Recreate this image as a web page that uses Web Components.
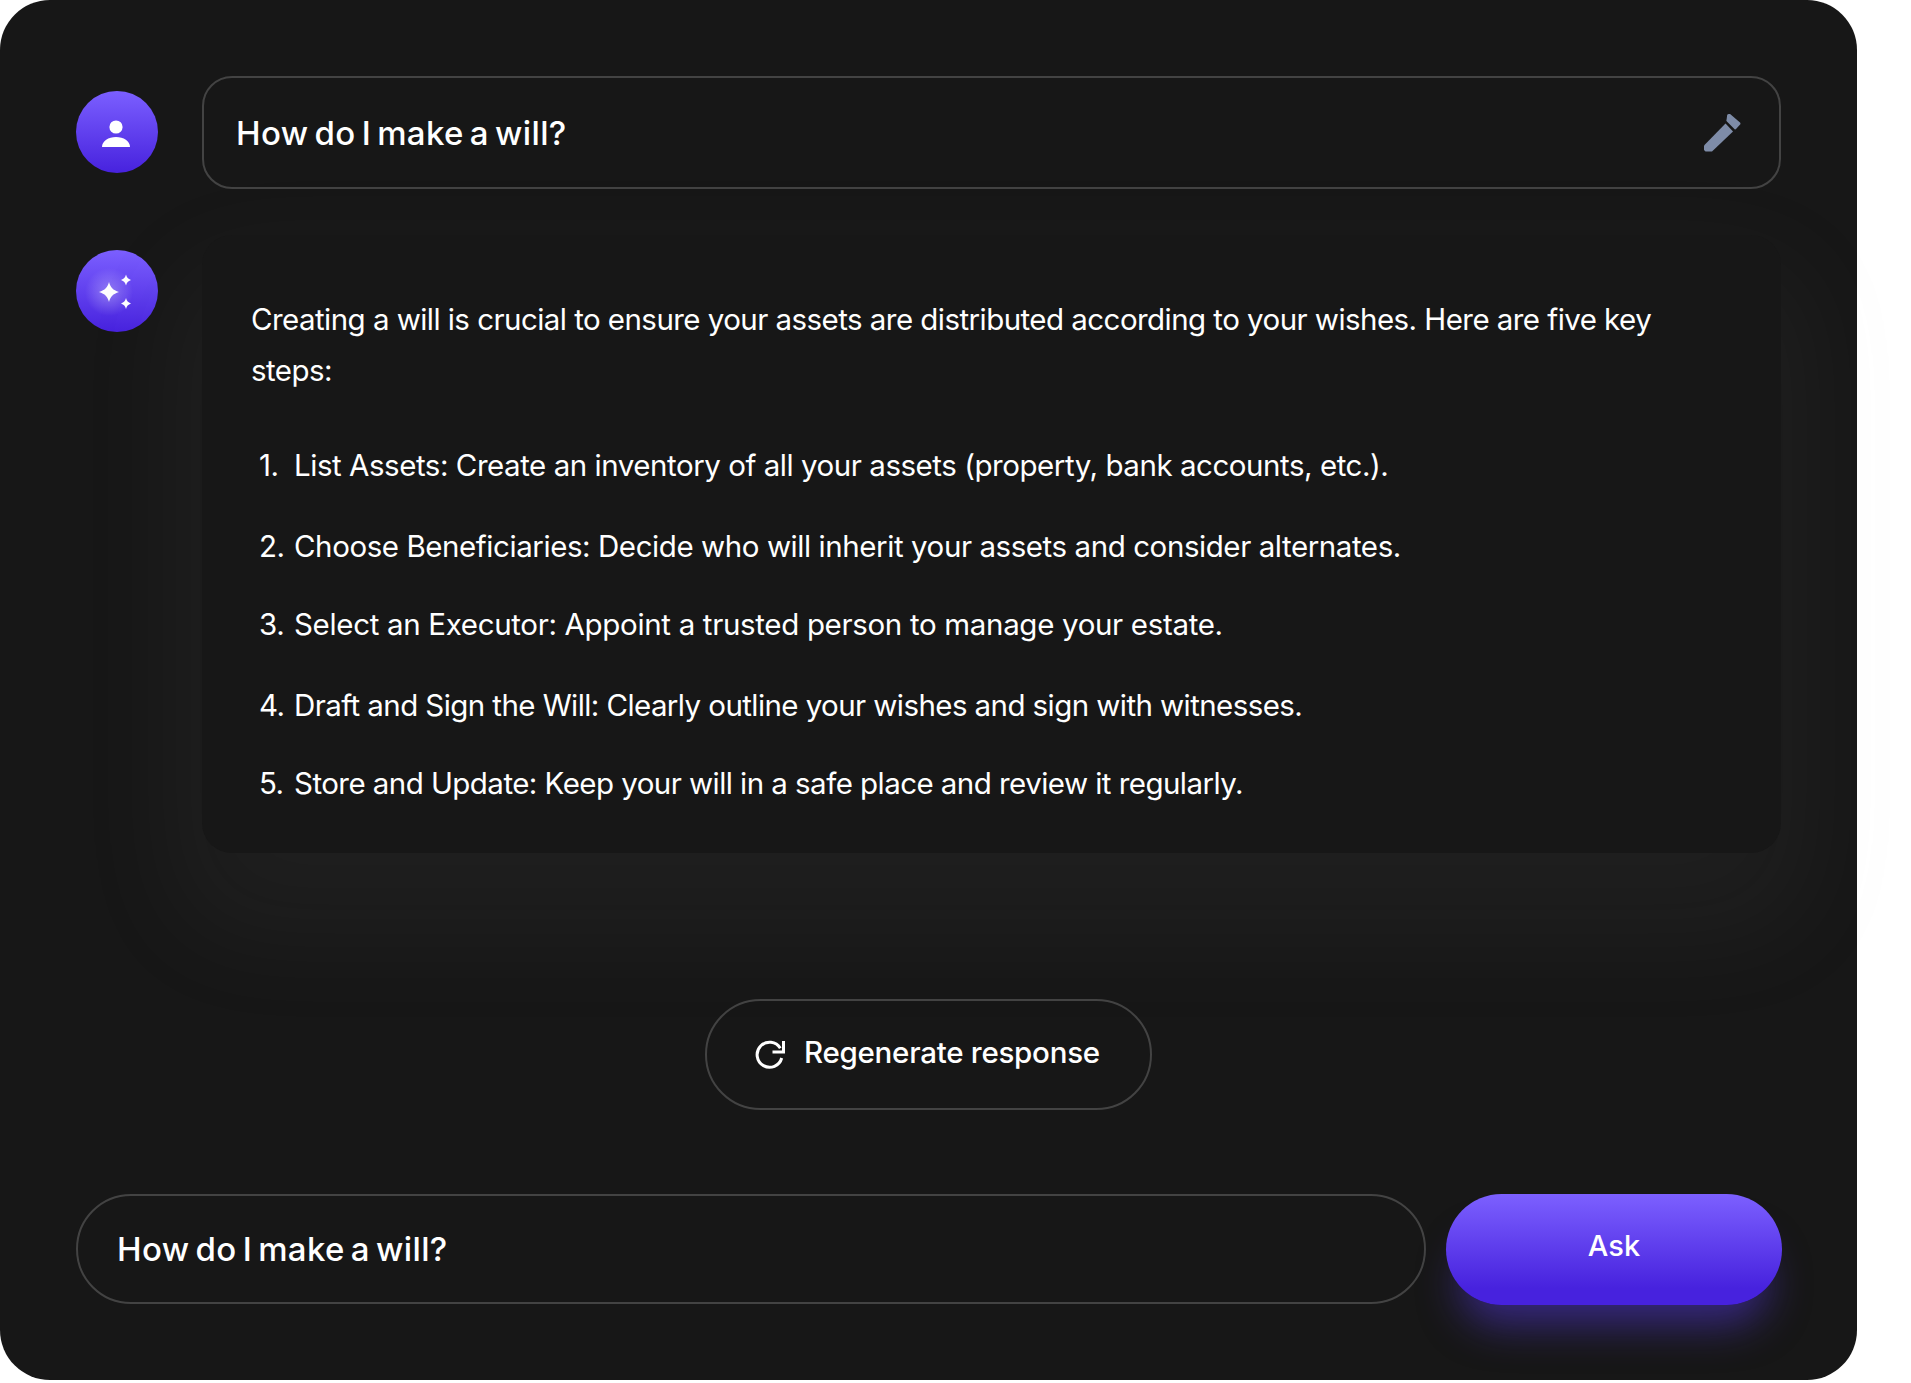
<!DOCTYPE html>
<html lang="en"><head><meta charset="utf-8"><title>Will chat</title>
<style>
html,body{margin:0;padding:0;background:#fff}
body{font-family:Inter,"Noto Sans",sans-serif;color:#fff}
</style></head><body>
<chat-panel>
  <chat-row kind="user">
    <question-box>How do I make a will?</question-box>
  </chat-row>
  <chat-row kind="ai">
    <answer-card>
      <p>Creating a will is crucial to ensure your assets are distributed according to your wishes. Here are five key steps:</p>
      <step-item n="1." gap="50" ls="-.46">List Assets: Create an inventory of all your assets (property, bank accounts, etc.).</step-item>
      <step-item n="2." gap="43" ls="-.43">Choose Beneficiaries: Decide who will inherit your assets and consider alternates.</step-item>
      <step-item n="3." gap="40" ls="-.33">Select an Executor: Appoint a trusted person to manage your estate.</step-item>
      <step-item n="4." gap="43" ls="-.58">Draft and Sign the Will: Clearly outline your wishes and sign with witnesses.</step-item>
      <step-item n="5." gap="40" ls="-.55">Store and Update: Keep your will in a safe place and review it regularly.</step-item>
    </answer-card>
  </chat-row>
  <regen-button>Regenerate response</regen-button>
  <ask-bar>How do I make a will?</ask-bar>
</chat-panel>
<script>
function def(name, html, init){
  customElements.define(name, class extends HTMLElement{
    connectedCallback(){
      if(this.shadowRoot) return;
      const r=this.attachShadow({mode:'open'});
      r.innerHTML=html;
      if(init) init(this,r);
    }
  });
}
def('chat-panel',`<style>
:host{display:block;width:1857px;height:1380px;box-sizing:border-box;background:#171717;border-radius:50px;padding:76px 76px 0;position:relative}
</style><slot></slot>`);
const userIcon=`<svg width="82" height="82" viewBox="0 0 82 82"><circle cx="40" cy="36" r="6.6" fill="#fff"/><path d="M26 56c0-6 6.500-10 14-10s14 4 14 10z" fill="#fff"/></svg>`;
const sparkIcon=`<svg width="82" height="82" viewBox="0 0 82 82"><defs><radialGradient id="g"><stop offset="0" stop-color="#fff" stop-opacity=".3"/><stop offset="1" stop-color="#fff" stop-opacity="0"/></radialGradient></defs><circle cx="33" cy="42" r="24" fill="url(#g)"/><path d="M33 32c1.500 5.500 3.800 8 10 10-6.200 2-8.500 4.500-10 10-1.500-5.500-3.800-8-10-10 6.200-2 8.500-4.500 10-10z" fill="#fff"/><path d="M50 24.500c.8 2.800 2 4.400 5 5.500-3 1.100-4.200 2.700-5 5.500-.8-2.800-2-4.400-5-5.500 3-1.100 4.200-2.700 5-5.500zM50 48c.8 2.800 2 4.400 5 5.500-3 1.100-4.200 2.700-5 5.500-.8-2.800-2-4.400-5-5.500 3-1.100 4.200-2.700 5-5.500z" fill="#fff"/></svg>`;
def('chat-row',`<style>
:host{display:flex;gap:44px;align-items:flex-start}
.av{flex:none;width:82px;height:82px;border-radius:50%;background:linear-gradient(180deg,#7B5FFF 0%,#4722DE 100%);margin-top:15px;display:block}
.av svg{display:block}
::slotted(*){flex:1}
</style><div class="av"></div><slot></slot>`,(el,r)=>{r.querySelector('.av').innerHTML=el.getAttribute('kind')==='user'?userIcon:sparkIcon;});
def('question-box',`<style>
:host{display:flex;align-items:center;justify-content:space-between;box-sizing:border-box;height:113px;border:2px solid #434343;border-radius:30px;padding:0 37px 0 32px;font:500 33px/1 Inter,sans-serif;letter-spacing:.35px;word-spacing:-3px;margin-bottom:46px}
span{position:relative;top:1px}
svg{display:block}
</style><span><slot></slot></span><svg width="38" height="38" viewBox="0 0 38 38"><path d="M0 24.500 21.500 2.500 29 10.500 8 30.500H1.500L0 29z" transform="translate(0 7)" fill="#7e8ca8"/><path d="M24.200 1.200 25.500.4q1-.6 1.900.2l9.600 8.400q.9 1 .1 1.900l-4.300 4.700-.9.200-8-8q-1-1-.3-2z" transform="translate(-1 -.4)" fill="#7e8ca8"/></svg>`);
def('answer-card',`<style>
:host{display:block;box-sizing:border-box;height:618px;background:#171717;border-radius:30px;padding:59px 50px 0 49px;box-shadow:0 55px 110px 25px rgba(136,136,136,.07);font:400 29.500px/51px Inter,sans-serif;letter-spacing:-.55px}
::slotted(p){margin:0;font:inherit}
</style><slot></slot>`);
def('step-item',`<style>
:host{display:flex;margin-top:var(--gap,30px);font:400 29.500px/38px Inter,sans-serif;letter-spacing:var(--ls,-.55px)}
b{font-weight:400;width:43px;flex:none;padding-left:8px;box-sizing:border-box}
</style><b></b><span><slot></slot></span>`,(el,r)=>{r.querySelector('b').textContent=el.getAttribute('n');el.style.setProperty('--gap',el.getAttribute('gap')+'px');el.style.setProperty('--ls',el.getAttribute('ls')+'px');});
def('regen-button',`<style>
:host{display:flex;align-items:center;gap:19px;box-sizing:border-box;width:447px;height:111px;margin:146px auto 0 629px;border:2px solid #434343;border-radius:56px;padding:0 0 0 48px;font:500 29.500px/1 Inter,sans-serif;letter-spacing:-.26px}
span{position:relative;top:-2px}
svg{display:block;flex:none}
</style><svg width="30" height="30" viewBox="0 0 30 30" fill="none" stroke="#fff" stroke-width="3"><path d="M26.700 18A12.500 12.500 0 1 1 25.300 8.250"/><path d="M28.500 1V12H17.500"/></svg><span><slot></slot></span>`);
def('ask-bar',`<style>
:host{display:flex;gap:20px;margin-top:84px}
.in{flex:none;width:1350px;height:110px;box-sizing:border-box;border:2px solid #434343;border-radius:55px;padding:0 0 0 39px;display:flex;align-items:center;font:500 33px/1 Inter,sans-serif;letter-spacing:.35px;word-spacing:-3px}
.btn{flex:none;width:336px;height:111px;border-radius:56px;background:linear-gradient(180deg,#7C60FF 0%,#4722DE 85%);box-shadow:0 34px 40px -14px rgba(86,56,230,.5);display:flex;align-items:center;justify-content:center;font:500 29px/1 Inter,sans-serif;padding-bottom:8px;box-sizing:border-box}
</style><div class="in"><slot></slot></div><div class="btn">Ask</div>`);
</script>
</body></html>
